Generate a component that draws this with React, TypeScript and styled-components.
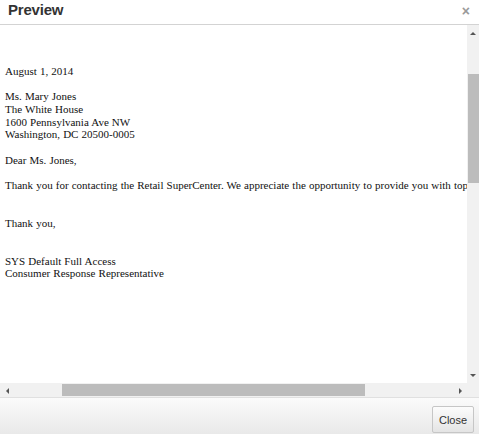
import React from "react";
import styled, { createGlobalStyle, css } from "styled-components";

const Global = createGlobalStyle`
  html, body { margin: 0; padding: 0; background: #fff; }
  body { width: 479px; height: 434px; overflow: hidden; }
  #root { width: 479px; height: 434px; }
`;

const Dialog = styled.div`
  width: 479px;
  height: 434px;
  display: flex;
  flex-direction: column;
  background: #fff;
  font-family: "Liberation Sans", Arial, sans-serif;
`;

const Header = styled.div`
  height: 24px;
  flex: none;
  display: flex;
  align-items: center;
  justify-content: space-between;
  padding: 0 9px 0 8px;
  border-bottom: 1px solid #d3d3d3;
`;

const Title = styled.div`
  font-size: 15px;
  font-weight: bold;
  color: #333;
  line-height: 20px;
  margin-top: -4px;
  letter-spacing: -0.2px;
`;

const CloseX = styled.div`
  font-size: 14px;
  font-weight: bold;
  color: #9a9a9a;
  line-height: 14px;
  margin-top: -3px;
`;

const Body = styled.div`
  flex: 1;
  min-height: 0;
  display: grid;
  grid-template-columns: 1fr 12px;
  grid-template-rows: 1fr 14px;
`;

const Viewport = styled.div`
  overflow: hidden;
  min-width: 0;
`;

const Letter = styled.div`
  padding: 40px 0 0 5px;
  font-family: "Liberation Serif", "Times New Roman", serif;
  font-size: 11px;
  word-spacing: 0.35px;
  line-height: 12.65px;
  color: #111;
  white-space: nowrap;
`;

const Block = styled.div<{ $gap: number }>`
  margin-top: ${(p) => p.$gap * 12.65}px;
`;

const Track = styled.div<{ $dir: "v" | "h" }>`
  background: #f1f1f1;
  display: flex;
  ${(p) =>
    p.$dir === "v"
      ? css`
          flex-direction: column;
          align-items: stretch;
        `
      : css`
          flex-direction: row;
          align-items: stretch;
          padding-top: 1px;
        `}
`;

const ArrowCell = styled.div<{ $dir: "v" | "h" }>`
  flex: none;
  display: flex;
  align-items: center;
  justify-content: center;
  ${(p) => (p.$dir === "v" ? "height: 16px;" : "width: 14px;")}
`;

const Tri = styled.span<{ $d: "up" | "down" | "left" | "right" }>`
  width: 0;
  height: 0;
  border-style: solid;
  ${(p) =>
    p.$d === "up"
      ? css`
          border-width: 0 3px 3px 3px;
          border-color: transparent transparent #555 transparent;
        `
      : p.$d === "down"
      ? css`
          border-width: 3px 3px 0 3px;
          border-color: #555 transparent transparent transparent;
        `
      : p.$d === "left"
      ? css`
          border-width: 3px 3px 3px 0;
          border-color: transparent #555 transparent transparent;
        `
      : css`
          border-width: 3px 0 3px 3px;
          border-color: transparent transparent transparent #555;
        `}
`;

const Lane = styled.div`
  flex: 1;
  display: flex;
`;

const VThumb = styled.div<{ $offset: number; $size: number }>`
  margin: ${(p) => p.$offset}px 0 0 1px;
  width: 11px;
  height: ${(p) => p.$size}px;
  background: #bcbcbc;
`;

const HThumb = styled.div<{ $offset: number; $size: number }>`
  margin: 0 0 0 ${(p) => p.$offset}px;
  height: 12px;
  width: ${(p) => p.$size}px;
  background: #bcbcbc;
`;

const Corner = styled.div`
  background: #f1f1f1;
`;

const Footer = styled.div`
  flex: none;
  border-top: 1px solid #e0e0e0;
  background: linear-gradient(#fbfbfb, #e9e9e9);
  display: flex;
  justify-content: flex-end;
  align-items: flex-start;
  padding: 8px 5px 0 0;
  box-sizing: border-box;
  height: 37px;
`;

const Button = styled.button`
  height: 27px;
  width: 42px;
  padding: 0;
  border: 1px solid #c6c6c6;
  border-radius: 2px;
  background: linear-gradient(#fcfcfc, #e4e4e4);
  font-family: "Liberation Sans", Arial, sans-serif;
  font-size: 11px;
  color: #333;
  cursor: pointer;
`;

const blocks: { gap: number; lines: string[] }[] = [
  { gap: 0, lines: ["August 1, 2014"] },
  {
    gap: 1,
    lines: [
      "Ms. Mary Jones",
      "The White House",
      "1600 Pennsylvania Ave NW",
      "Washington, DC 20500-0005",
    ],
  },
  { gap: 1, lines: ["Dear Ms. Jones,"] },
  {
    gap: 1,
    lines: [
      "Thank you for contacting the Retail SuperCenter. We appreciate the opportunity to provide you with top",
    ],
  },
  { gap: 2, lines: ["Thank you,"] },
  {
    gap: 2,
    lines: ["SYS Default Full Access", "Consumer Response Representative"],
  },
];

export default function App() {
  return (
    <>
      <Global />
      <Dialog>
        <Header>
          <Title>Preview</Title>
          <CloseX>×</CloseX>
        </Header>
        <Body>
          <Viewport>
            <Letter>
              {blocks.map((b, i) => (
                <Block key={i} $gap={b.gap}>
                  {b.lines.map((l, j) => (
                    <div key={j}>{l}</div>
                  ))}
                </Block>
              ))}
            </Letter>
          </Viewport>
          <Track $dir="v">
            <ArrowCell $dir="v">
              <Tri $d="up" />
            </ArrowCell>
            <Lane>
              <VThumb $offset={33} $size={109} />
            </Lane>
            <ArrowCell $dir="v">
              <Tri $d="down" />
            </ArrowCell>
          </Track>
          <Track $dir="h">
            <ArrowCell $dir="h">
              <Tri $d="left" />
            </ArrowCell>
            <Lane>
              <HThumb $offset={48} $size={303} />
            </Lane>
            <ArrowCell $dir="h">
              <Tri $d="right" />
            </ArrowCell>
          </Track>
          <Corner />
        </Body>
        <Footer>
          <Button>Close</Button>
        </Footer>
      </Dialog>
    </>
  );
}
